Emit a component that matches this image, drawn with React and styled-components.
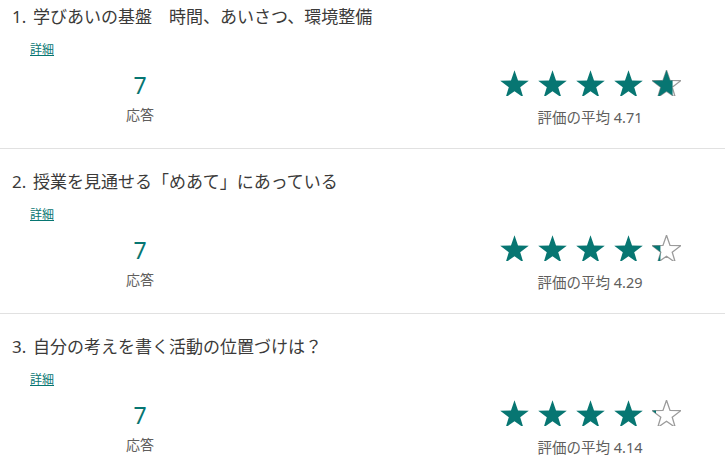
import React from "react";
import styled, { createGlobalStyle } from "styled-components";

const GlobalStyle = createGlobalStyle`
  html, body { margin: 0; padding: 0; background: #ffffff; }
  body {
    font-family: "Noto Sans", "Noto Sans CJK JP", sans-serif;
    color: #323130;
    width: 725px;
    overflow: hidden;
  }
`;

const Page = styled.div`
  display: flex;
  flex-direction: column;
  width: 725px;
`;

const Section = styled.section`
  display: flex;
  flex-direction: column;
  align-items: flex-start;
  padding: ${(p) => (p.$first ? "7px" : "23px")} 0 21px;
  border-bottom: 1px solid #e1e1e1;
`;

const Title = styled.div`
  display: flex;
  align-items: center;
  padding-left: 12px;
  font-size: 17px;
  line-height: 20px;
  color: #3b3a39;
  white-space: pre;
`;

const Num = styled.span`
  width: 21px;
  flex: none;
`;

const Detail = styled.a`
  display: block;
  margin: 15px 0 0 30px;
  font-size: 12px;
  line-height: 16px;
  color: #077672;
  text-decoration: underline;
  cursor: pointer;
`;

const Row = styled.div`
  align-self: stretch;
  display: flex;
  justify-content: space-between;
  align-items: flex-start;
  padding-left: 30px;
  margin-top: 12px;
`;

const Responses = styled.div`
  width: 220px;
  display: flex;
  flex-direction: column;
  align-items: center;
`;

const Count = styled.div`
  font-size: 23px;
  line-height: 30px;
  color: #077672;
`;

const CountLabel = styled.div`
  margin-top: 5px;
  font-size: 14px;
  line-height: 20px;
  color: #605e5c;
`;

const Rating = styled.div`
  width: 270px;
  display: flex;
  flex-direction: column;
  align-items: center;
`;

const Stars = styled.div`
  display: flex;
  gap: 9px;
  height: 26px;
`;

const RatingLabel = styled.div`
  margin-top: 11px;
  font-size: 14.5px;
  line-height: 20px;
  color: #605e5c;
`;

const W = 29;
const H = 26;
const R = 15;
const r = R * 0.4;
const cx = W / 2;
const cy = R + 0.3;
const pts = Array.from({ length: 10 }, (_, i) => {
  const rad = i % 2 === 0 ? R : r;
  const a = (Math.PI / 5) * i - Math.PI / 2;
  return `${(cx + rad * Math.cos(a)).toFixed(2)},${(cy + rad * Math.sin(a)).toFixed(2)}`;
}).join(" ");

function Star({ fill, id }) {
  return (
    <svg width={W} height={H} viewBox={`0 0 ${W} ${H}`}>
      <defs>
        <clipPath id={id}>
          <rect x="0" y="0" width={W * fill} height={H} />
        </clipPath>
      </defs>
      {fill < 1 && (
        <polygon points={pts} fill="none" stroke="#9b9b9b" strokeWidth="1.3" strokeLinejoin="miter" />
      )}
      {fill > 0 && <polygon points={pts} fill="#077672" clipPath={`url(#${id})`} />}
    </svg>
  );
}

const items = [
  { n: "1.", title: "学びあいの基盤　時間、あいさつ、環境整備", avg: 4.71 },
  { n: "2.", title: "授業を見通せる「めあて」にあっている", avg: 4.29 },
  { n: "3.", title: "自分の考えを書く活動の位置づけは？", avg: 4.14 },
];

export default function App() {
  return (
    <Page>
      <GlobalStyle />
      {items.map((it, idx) => (
        <Section key={idx} $first={idx === 0}>
          <Title>
            <Num>{it.n}</Num>
            {it.title}
          </Title>
          <Detail>詳細</Detail>
          <Row>
            <Responses>
              <Count>7</Count>
              <CountLabel>応答</CountLabel>
            </Responses>
            <Rating>
              <Stars>
                {[0, 1, 2, 3, 4].map((s) => (
                  <Star
                    key={s}
                    id={`clip-${idx}-${s}`}
                    fill={Math.max(0, Math.min(1, it.avg - s))}
                  />
                ))}
              </Stars>
              <RatingLabel>評価の平均 {it.avg.toFixed(2)}</RatingLabel>
            </Rating>
          </Row>
        </Section>
      ))}
    </Page>
  );
}
